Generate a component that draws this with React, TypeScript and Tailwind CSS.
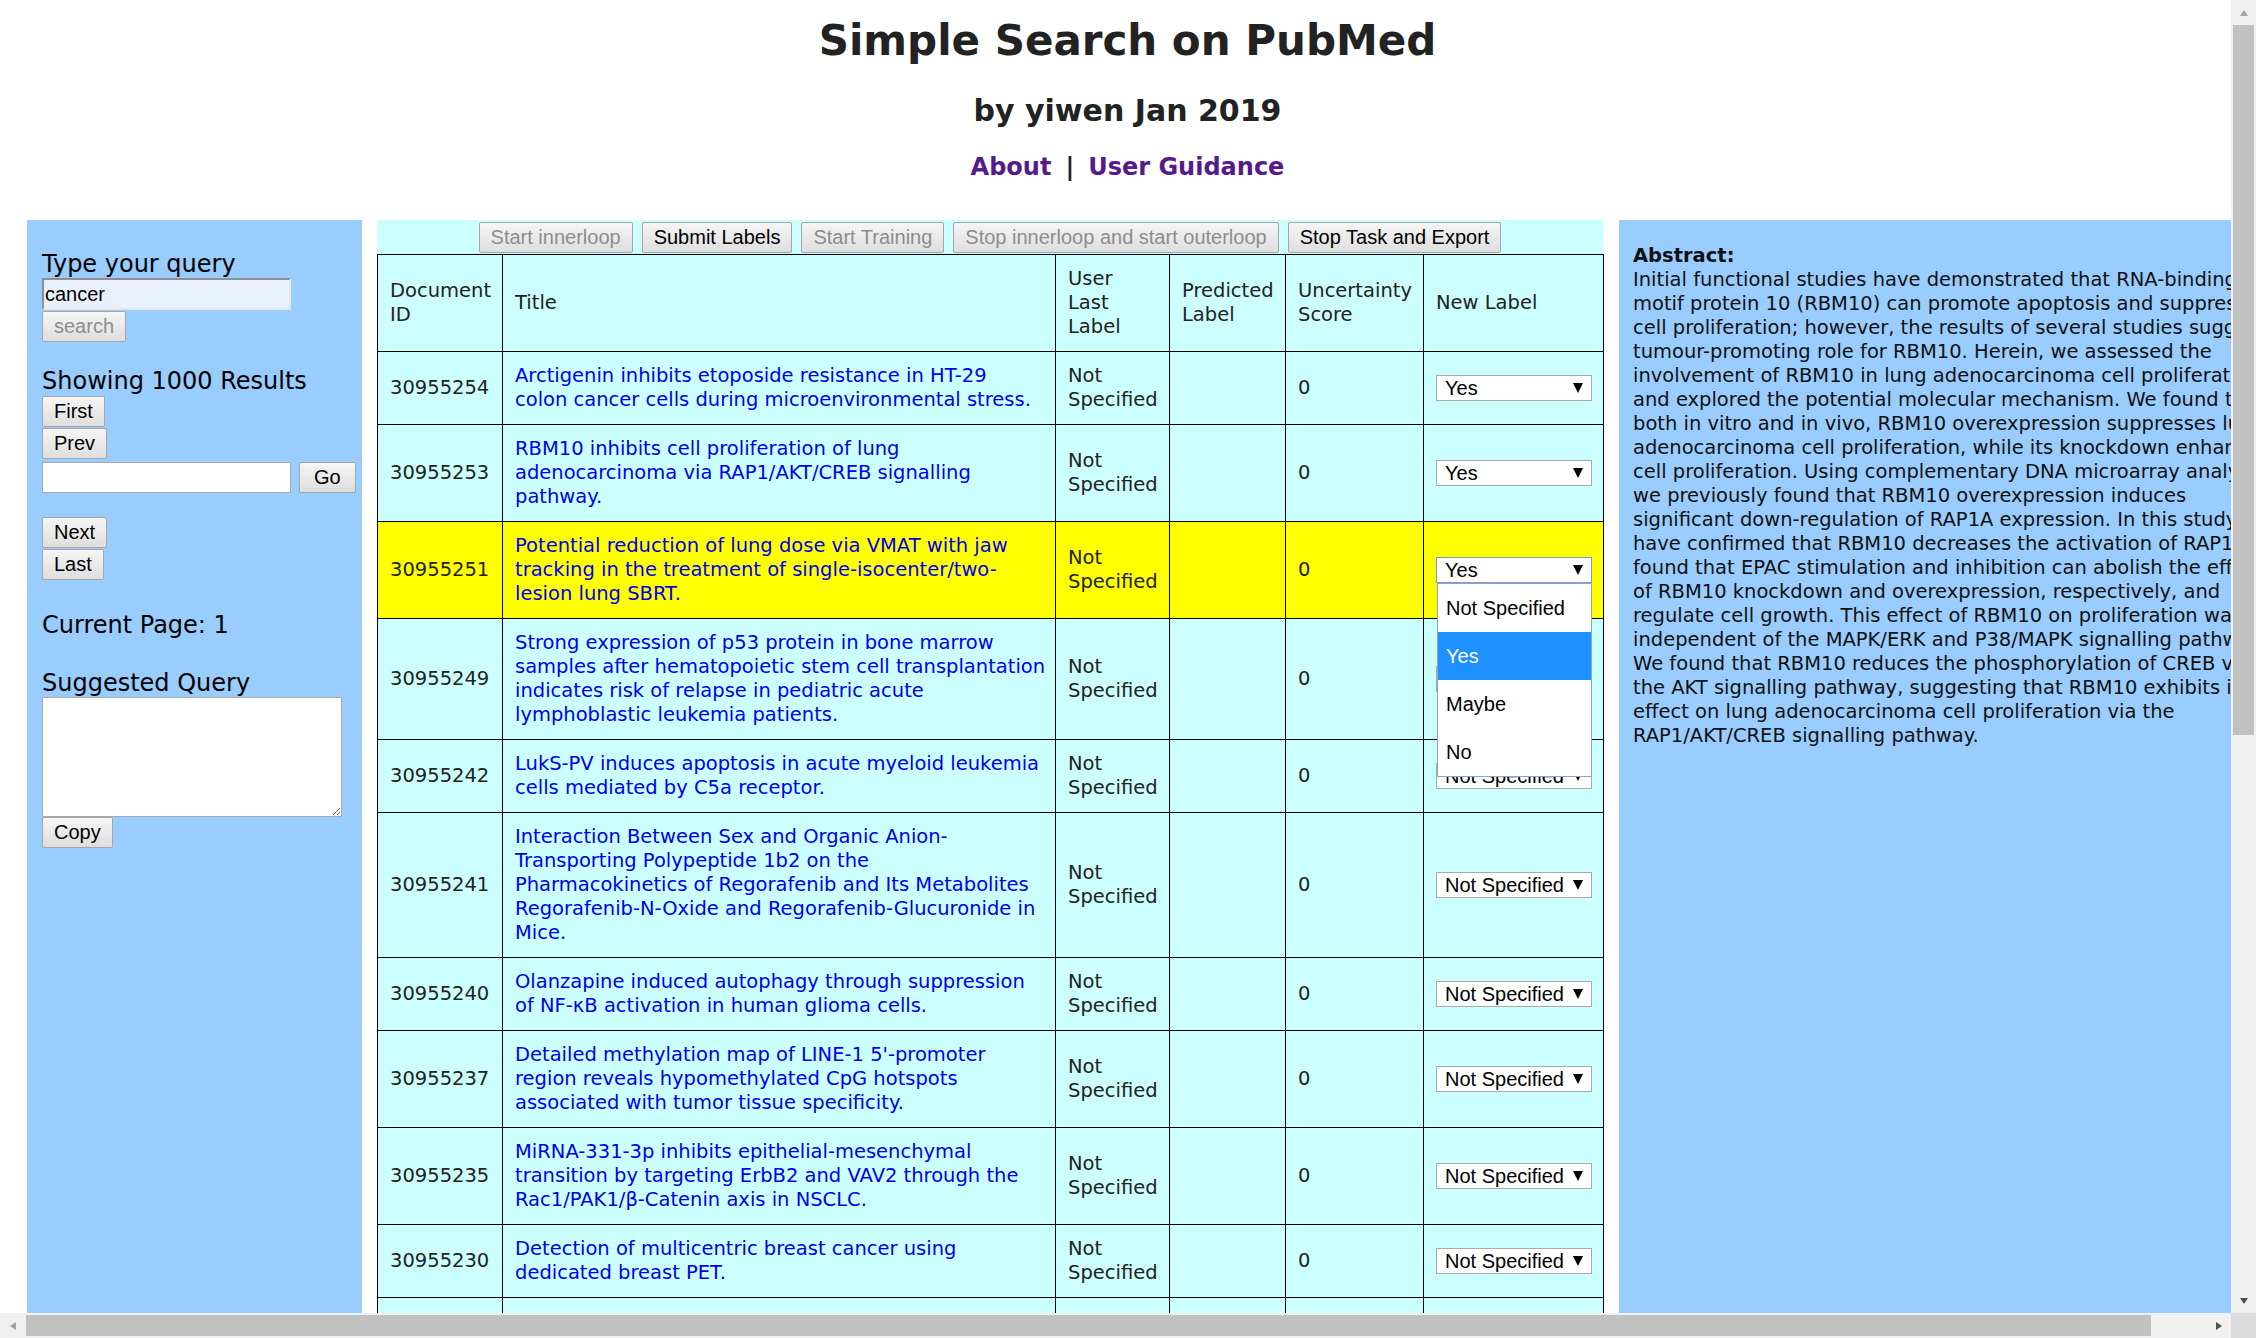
import React from "react";

const verdana = "font-['DejaVu_Sans',Verdana,sans-serif]";
const arial = "font-['Liberation_Sans',Arial,sans-serif]";

const rows = [
  {
    id: "30955254",
    title: ["Arctigenin inhibits etoposide resistance in HT-29", "colon cancer cells during microenvironmental stress."],
    label: "Yes",
  },
  {
    id: "30955253",
    title: ["RBM10 inhibits cell proliferation of lung", "adenocarcinoma via RAP1/AKT/CREB signalling", "pathway."],
    label: "Yes",
  },
  {
    id: "30955251",
    title: [
      "Potential reduction of lung dose via VMAT with jaw",
      "tracking in the treatment of single-isocenter/two-",
      "lesion lung SBRT.",
    ],
    label: "Yes",
    open: true,
  },
  {
    id: "30955249",
    title: [
      "Strong expression of p53 protein in bone marrow",
      "samples after hematopoietic stem cell transplantation",
      "indicates risk of relapse in pediatric acute",
      "lymphoblastic leukemia patients.",
    ],
    label: "Not Specified",
  },
  {
    id: "30955242",
    title: ["LukS-PV induces apoptosis in acute myeloid leukemia", "cells mediated by C5a receptor."],
    label: "Not Specified",
  },
  {
    id: "30955241",
    title: [
      "Interaction Between Sex and Organic Anion-",
      "Transporting Polypeptide 1b2 on the",
      "Pharmacokinetics of Regorafenib and Its Metabolites",
      "Regorafenib-N-Oxide and Regorafenib-Glucuronide in",
      "Mice.",
    ],
    label: "Not Specified",
  },
  {
    id: "30955240",
    title: ["Olanzapine induced autophagy through suppression", "of NF-κB activation in human glioma cells."],
    label: "Not Specified",
  },
  {
    id: "30955237",
    title: [
      "Detailed methylation map of LINE-1 5'-promoter",
      "region reveals hypomethylated CpG hotspots",
      "associated with tumor tissue specificity.",
    ],
    label: "Not Specified",
  },
  {
    id: "30955235",
    title: [
      "MiRNA-331-3p inhibits epithelial-mesenchymal",
      "transition by targeting ErbB2 and VAV2 through the",
      "Rac1/PAK1/β-Catenin axis in NSCLC.",
    ],
    label: "Not Specified",
  },
  {
    id: "30955230",
    title: ["Detection of multicentric breast cancer using", "dedicated breast PET."],
    label: "Not Specified",
  },
];

const abstractLines = [
  "Initial functional studies have demonstrated that RNA-binding",
  "motif protein 10 (RBM10) can promote apoptosis and suppress",
  "cell proliferation; however, the results of several studies suggest a",
  "tumour-promoting role for RBM10. Herein, we assessed the",
  "involvement of RBM10 in lung adenocarcinoma cell proliferation",
  "and explored the potential molecular mechanism. We found that",
  "both in vitro and in vivo, RBM10 overexpression suppresses lung",
  "adenocarcinoma cell proliferation, while its knockdown enhances",
  "cell proliferation. Using complementary DNA microarray analysis,",
  "we previously found that RBM10 overexpression induces",
  "significant down-regulation of RAP1A expression. In this study, we",
  "have confirmed that RBM10 decreases the activation of RAP1. We",
  "found that EPAC stimulation and inhibition can abolish the effects",
  "of RBM10 knockdown and overexpression, respectively, and",
  "regulate cell growth. This effect of RBM10 on proliferation was",
  "independent of the MAPK/ERK and P38/MAPK signalling pathways.",
  "We found that RBM10 reduces the phosphorylation of CREB via",
  "the AKT signalling pathway, suggesting that RBM10 exhibits its",
  "effect on lung adenocarcinoma cell proliferation via the",
  "RAP1/AKT/CREB signalling pathway.",
];

function Btn({
  children,
  disabled,
  className = "",
}: {
  children: React.ReactNode;
  disabled?: boolean;
  className?: string;
}) {
  return (
    <button
      className={`${arial} block h-[31px] rounded-[2px] border border-[#a6a6a6] bg-gradient-to-b from-[#f5f5f5] to-[#dedede] px-[11px] text-[20px] leading-[29px] ${
        disabled ? "text-[#8d8d8d]" : "text-black"
      } ${className}`}
    >
      {children}
    </button>
  );
}

function Arrow({ dir, color }: { dir: "up" | "down" | "left" | "right"; color: string }) {
  const d = {
    up: "M4 1L8 7H0z",
    down: "M0 1h8L4 7z",
    left: "M1 4L7 0v8z",
    right: "M1 0l6 4-6 4z",
  }[dir];
  return (
    <svg width="8" height="8" viewBox="0 0 8 8">
      <path d={d} fill={color} />
    </svg>
  );
}

function LabelSelect({ value, open }: { value: string; open?: boolean }) {
  return (
    <div className="relative w-[156px]">
      <div
        className={`${arial} flex h-[26px] w-[156px] items-center justify-between border bg-white pl-[8px] pr-[8px] text-[20px] text-black ${
          open ? "border-[#7a9cd3]" : "border-[#a9a9a9]"
        }`}
      >
        <span>{value}</span>
        <svg width="10" height="10" viewBox="0 0 10 10">
          <path d="M0 0h10L5 10z" fill="#000" />
        </svg>
      </div>
      {open && (
        <div className={`${arial} absolute left-[1px] top-full z-10 w-[155px] border border-[#8fa3c4] bg-white text-[20px]`}>
          {["Not Specified", "Yes", "Maybe", "No"].map((o) => (
            <div
              key={o}
              className={`flex h-[48px] items-center pl-[8px] ${o === "Yes" ? "bg-[#1e90ff] text-white" : "text-black"}`}
            >
              {o}
            </div>
          ))}
        </div>
      )}
    </div>
  );
}

const cell = "border border-black px-[12px] py-[12px] align-middle";

export default function App() {
  return (
    <div className={`${verdana} flex h-[1338px] w-[2256px] flex-col overflow-hidden bg-white text-black`}>
      <div className="flex min-h-0 flex-1">
        {/* page */}
        <div className="flex min-w-0 flex-1 flex-col overflow-hidden">
          <div className="pl-[24px] text-center text-[#222]">
            <h1 className="mt-[16px] text-[42px] font-bold leading-[50px]">Simple Search on PubMed</h1>
            <h2 className="mt-[27px] text-[30px] font-bold leading-[36px]">by yiwen Jan 2019</h2>
            <div className="mt-[24px] text-[24px] font-bold leading-[29px]">
              <a className="text-[#551a8b]">About</a>
              <span className="mx-[14px]">|</span>
              <a className="text-[#551a8b]">User Guidance</a>
            </div>
          </div>

          <div className="mt-[38px] flex min-h-0 flex-1 pl-[27px]">
            {/* left panel */}
            <div className="w-[335px] shrink-0 bg-[#99ccff] pl-[15px] pt-[30px] text-[24px]">
              <div className="leading-[28px]">Type your query</div>
              <div
                className={`${arial} flex h-[32px] w-[249px] items-center border-2 border-b-[#e6e6e6] border-l-[#8f8f8f] border-r-[#e6e6e6] border-t-[#8f8f8f] bg-[#e8f0fe] pl-[1px] text-[20px]`}
              >
                cancer
              </div>
              <Btn disabled className="mt-[1px]">
                search
              </Btn>
              <div className="mt-[25px] leading-[29px]">Showing 1000 Results</div>
              <Btn>First</Btn>
              <Btn className="mt-[1px]">Prev</Btn>
              <div className="mt-[3px] flex items-center gap-[8px]">
                <div className="h-[31px] w-[249px] border border-[#a9a9a9] bg-white" />
                <Btn className="px-[14px]">Go</Btn>
              </div>
              <Btn className="mt-[24px]">Next</Btn>
              <Btn className="mt-[1px]">Last</Btn>
              <div className="mt-[31px] leading-[29px]">Current Page: 1</div>
              <div className="mt-[29px] leading-[28px]">Suggested Query</div>
              <textarea
                readOnly
                className="block h-[120px] w-[300px] border border-[#a9a9a9] bg-white outline-none"
              />
              <Btn>Copy</Btn>
            </div>

            {/* middle panel */}
            <div className="ml-[15px] w-[1226px] shrink-0 bg-[#ccffff] pt-[2px]">
              <div className="flex h-[31px] justify-center gap-[9px]">
                <Btn disabled>Start innerloop</Btn>
                <Btn>Submit Labels</Btn>
                <Btn disabled>Start Training</Btn>
                <Btn disabled>Stop innerloop and start outerloop</Btn>
                <Btn>Stop Task and Export</Btn>
              </div>
              <table className="mt-[1px] w-[1226px] table-fixed border-collapse text-[19.5px] leading-[24px] text-[#222]">
                <colgroup>
                  <col className="w-[125px]" />
                  <col className="w-[553px]" />
                  <col className="w-[114px]" />
                  <col className="w-[116px]" />
                  <col className="w-[138px]" />
                  <col className="w-[180px]" />
                </colgroup>
                <thead>
                  <tr>
                    <th className={`${cell} text-left font-normal`}>
                      Document
                      <br />
                      ID
                    </th>
                    <th className={`${cell} text-left font-normal`}>Title</th>
                    <th className={`${cell} text-left font-normal`}>
                      User
                      <br />
                      Last
                      <br />
                      Label
                    </th>
                    <th className={`${cell} text-left font-normal`}>
                      Predicted
                      <br />
                      Label
                    </th>
                    <th className={`${cell} text-left font-normal`}>
                      Uncertainty
                      <br />
                      Score
                    </th>
                    <th className={`${cell} text-left font-normal`}>New Label</th>
                  </tr>
                </thead>
                <tbody>
                  {rows.map((r) => (
                    <tr key={r.id} className={r.open ? "bg-[#ffff00]" : ""}>
                      <td className={cell}>{r.id}</td>
                      <td className={`${cell} whitespace-nowrap text-[#0000ee]`}>
                        {r.title.map((t, i) => (
                          <div key={i}>{t}</div>
                        ))}
                      </td>
                      <td className={cell}>
                        Not
                        <br />
                        Specified
                      </td>
                      <td className={cell}></td>
                      <td className={cell}>0</td>
                      <td className={`${cell} pl-[12px]`}>
                        <LabelSelect value={r.label} open={r.open} />
                      </td>
                    </tr>
                  ))}
                  <tr>
                    <td className={`${cell} h-[72px]`}></td>
                    <td className={cell}></td>
                    <td className={cell}></td>
                    <td className={cell}></td>
                    <td className={cell}></td>
                    <td className={cell}></td>
                  </tr>
                </tbody>
              </table>
            </div>

            {/* right panel */}
            <div className="ml-[16px] w-[660px] shrink-0 bg-[#99ccff] pl-[14px] pt-[24px] text-[19.5px] leading-[24px] text-[#111]">
              <div className="font-bold">Abstract:</div>
              {abstractLines.map((l, i) => (
                <div key={i} className="whitespace-nowrap">
                  {l}
                </div>
              ))}
            </div>
          </div>
        </div>

        {/* vertical scrollbar */}
        <div className="flex w-[25px] shrink-0 flex-col items-center bg-[#f0f0f0]">
          <div className="flex h-[25px] items-center justify-center">
            <Arrow dir="up" color="#a3a3a3" />
          </div>
          <div className="h-[710px] w-[21px] bg-[#c1c1c1]" />
          <div className="flex-1" />
          <div className="flex h-[25px] items-center justify-center">
            <Arrow dir="down" color="#505050" />
          </div>
        </div>
      </div>

      {/* horizontal scrollbar */}
      <div className="flex h-[25px] shrink-0 bg-[#f0f0f0]">
        <div className="flex w-[25px] items-center justify-center">
          <Arrow dir="left" color="#a3a3a3" />
        </div>
        <div className="flex flex-1 items-center">
          <div className="ml-[1px] h-[21px] w-[2125px] bg-[#c1c1c1]" />
        </div>
        <div className="flex w-[25px] items-center justify-center">
          <Arrow dir="right" color="#505050" />
        </div>
        <div className="w-[25px] bg-[#dcdcdc]" />
      </div>
    </div>
  );
}
